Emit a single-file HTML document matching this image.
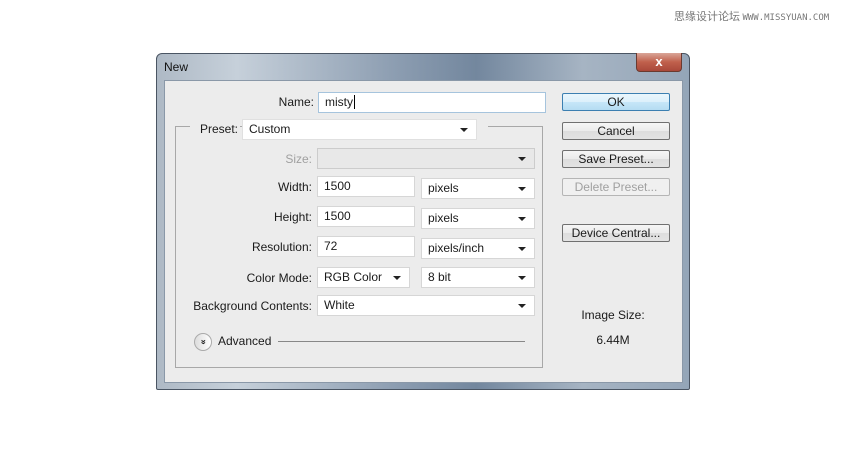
<!DOCTYPE html>
<html><head><meta charset="utf-8"><style>
*{margin:0;padding:0;box-sizing:border-box}
body{width:850px;height:450px;background:#fff;position:relative;overflow:hidden;font-family:"Liberation Sans","DejaVu Sans",sans-serif;font-size:12px;color:#1a1a1a}
.a{position:absolute}
.frame{left:156px;top:53px;width:534px;height:337px;border:1px solid #4a5563;border-radius:6px 6px 2px 2px;background:linear-gradient(90deg,#aeb9c5 0%,#c6d0da 15%,#8c9db1 45%,#73879e 60%,#a6b4c3 80%,#94a5b8 100%)}
.client{left:164px;top:80px;width:519px;height:303px;background:#ececec;border:1px solid #8a98a8}
.inp{background:#fff;border:1px solid #d6d6d6;height:21px;padding:2px 6px;line-height:15px}
.lbl{text-align:right;width:200px;line-height:16px}
.sel::after{content:"";position:absolute;right:8px;top:8px;border-left:4px solid transparent;border-right:4px solid transparent;border-top:4px solid #222}
.btn{left:562px;width:108px;height:18px;border:1px solid #707070;border-radius:2px;background:linear-gradient(#f6f6f6,#ebebeb 50%,#dddddd 51%,#e3e3e3);text-align:center;line-height:16px}
</style></head><body>
<div class="a" style="left:674px;top:8px;font-family:'Noto Sans CJK SC',sans-serif;font-size:11px;color:#777">思缘设计论坛 <span style="font-family:'DejaVu Sans Mono',monospace;font-size:9px">WWW.MISSYUAN.COM</span></div>
<div class="a frame"></div>
<div class="a" style="left:164px;top:60px;font-size:12px;color:#111">New</div>
<div class="a" style="left:636px;top:53px;width:46px;height:19px;border:1px solid #6a3a30;border-top:none;border-radius:0 0 4px 4px;background:linear-gradient(#d9a598,#c0604c 50%,#a9483a);color:#fff;text-align:center;font-weight:bold;line-height:17px;font-size:13px">x</div>
<div class="a client"></div>

<div class="a lbl" style="left:114px;top:94px">Name:</div>
<div class="a inp" style="left:318px;top:92px;width:228px;border-color:#a6c4dd">misty<span style="border-left:1px solid #000;margin-left:1px"></span></div>

<div class="a" style="left:175px;top:126px;width:368px;height:242px;border:1px solid #a8a8a8"></div>
<div class="a" style="left:190px;top:119px;width:50px;height:20px;background:#ececec"></div>
<div class="a" style="left:477px;top:119px;width:65px;height:20px;background:#ececec"></div>
<div class="a" style="left:488px;top:126px;width:55px;height:1px;background:#a8a8a8"></div>
<div class="a lbl" style="left:38px;top:121px">Preset:</div>
<div class="a inp sel" style="left:242px;top:119px;width:235px;border-color:#e0e0e0">Custom</div>

<div class="a lbl" style="left:112px;top:151px;color:#a0a0a0">Size:</div>
<div class="a inp sel" style="left:317px;top:148px;width:218px;background:#e8e8e8;border-color:#ccc"></div>

<div class="a lbl" style="left:112px;top:179px">Width:</div>
<div class="a inp" style="left:317px;top:176px;width:98px">1500</div>
<div class="a inp sel" style="left:421px;top:178px;width:114px">pixels</div>

<div class="a lbl" style="left:112px;top:209px">Height:</div>
<div class="a inp" style="left:317px;top:206px;width:98px">1500</div>
<div class="a inp sel" style="left:421px;top:208px;width:114px">pixels</div>

<div class="a lbl" style="left:112px;top:239px">Resolution:</div>
<div class="a inp" style="left:317px;top:236px;width:98px">72</div>
<div class="a inp sel" style="left:421px;top:238px;width:114px">pixels/inch</div>

<div class="a lbl" style="left:112px;top:270px">Color Mode:</div>
<div class="a inp sel" style="left:317px;top:267px;width:93px">RGB Color</div>
<div class="a inp sel" style="left:421px;top:267px;width:114px">8 bit</div>

<div class="a lbl" style="left:112px;top:298px">Background Contents:</div>
<div class="a inp sel" style="left:317px;top:295px;width:218px">White</div>

<div class="a" style="left:194px;top:333px;width:18px;height:18px;border-radius:50%;border:1px solid #aaa;background:linear-gradient(#fff,#ddd);text-align:center;font-size:9px;line-height:15px;font-weight:bold;transform:rotate(90deg)">»</div>
<div class="a" style="left:218px;top:334px">Advanced</div>
<div class="a" style="left:278px;top:341px;width:247px;height:1px;background:#888"></div>

<div class="a btn" style="top:93px;border-color:#3c7fb1;background:linear-gradient(#eaf6fd,#dcf0fb 50%,#c6e6f8 51%,#b5dcf2)">OK</div>
<div class="a btn" style="top:122px">Cancel</div>
<div class="a btn" style="top:150px">Save Preset...</div>
<div class="a btn" style="top:178px;color:#a0a0a0;border-color:#b5b5b5;background:#f0f0f0">Delete Preset...</div>
<div class="a btn" style="top:224px">Device Central...</div>

<div class="a" style="left:563px;top:308px;width:100px;text-align:center">Image Size:</div>
<div class="a" style="left:563px;top:333px;width:100px;text-align:center">6.44M</div>
</body></html>
